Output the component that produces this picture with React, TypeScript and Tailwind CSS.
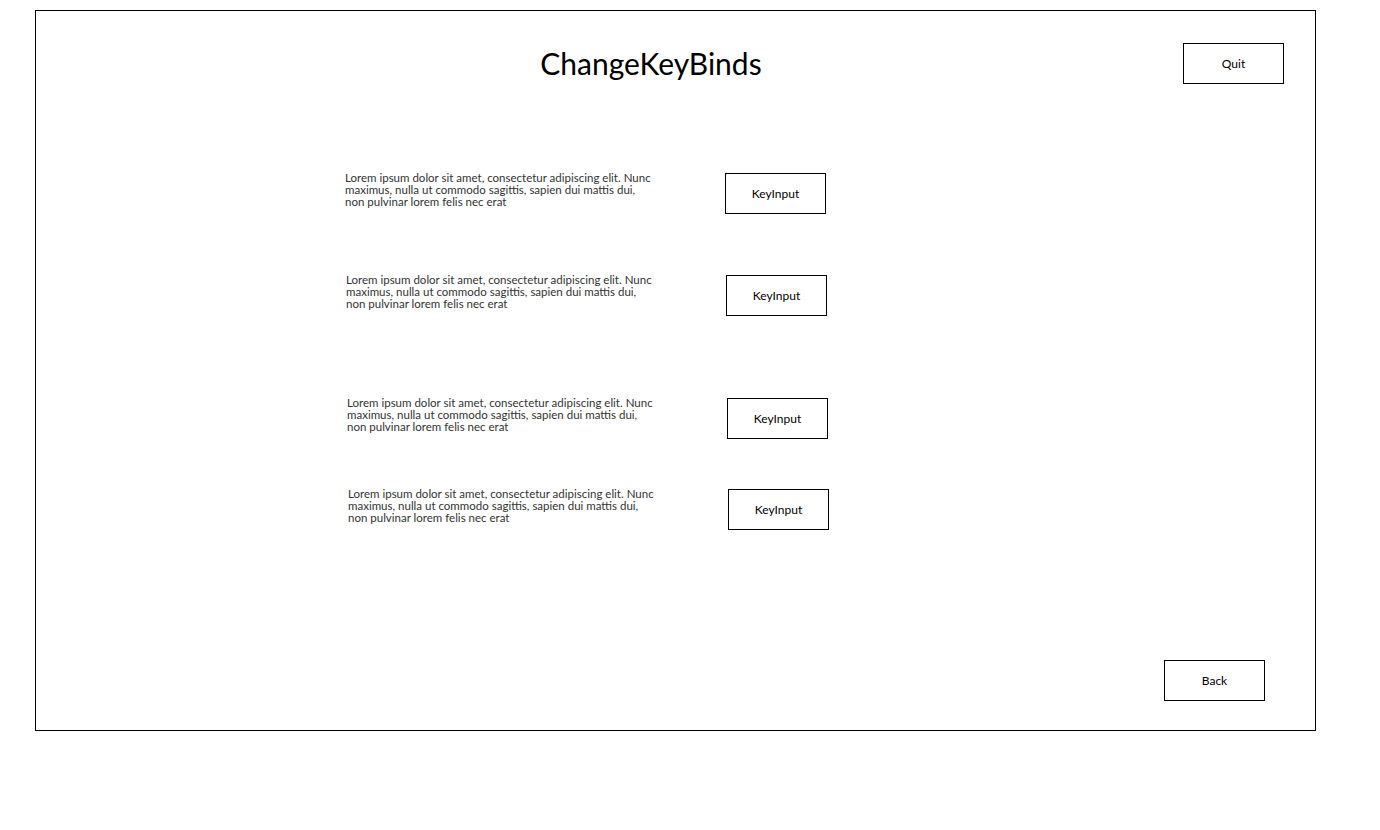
import React from "react";

const loremLines = [
 "Lorem ipsum dolor sit amet, consectetur adipiscing elit. Nunc",
 "maximus, nulla ut commodo sagittis, sapien dui mattis dui,",
 "non pulvinar lorem felis nec erat",
];

type Row = { gap: string; shift: string };

const rows: Row[] = [
 { gap: "mt-[89px]", shift: "ml-[309px]" },
 { gap: "mt-[61px]", shift: "ml-[310px]" },
 { gap: "mt-[82px]", shift: "ml-[311px]" },
 { gap: "mt-[50px]", shift: "ml-[312px]" },
];

const Box: React.FC<{ label: string }> = ({ label }) => (
 <div className="w-[101px] h-[41px] border border-black flex items-center justify-center text-[12px] text-black">
  {label}
 </div>
);

const App: React.FC = () => {
 return (
  <div className="w-[1380px] h-[830px] bg-white font-['Lato',sans-serif] overflow-hidden">
   <div className="ml-[35px] mt-[10px] w-[1281px] h-[721px] border border-black flex flex-col">
    <div className="flex items-center mt-[32px]">
     <div className="ml-[415px] w-[400px] text-center text-[30px] leading-none text-black mt-[-2px]">
      ChangeKeyBinds
     </div>
     <div className="ml-[332px]">
      <Box label="Quit" />
     </div>
    </div>
    {rows.map((r, i) => (
     <div key={i} className={`flex items-start ${r.gap} ${r.shift}`}>
      <p className="w-[380px] whitespace-nowrap text-[11.5px] leading-[12px] text-[#333333] mt-[-1px]">
       {loremLines[0]}
       <br />
       {loremLines[1]}
       <br />
       {loremLines[2]}
      </p>
      <Box label="KeyInput" />
     </div>
    ))}
    <div className="mt-auto mb-[29px] ml-[1128px]">
     <Box label="Back" />
    </div>
   </div>
  </div>
 );
};

export default App;
